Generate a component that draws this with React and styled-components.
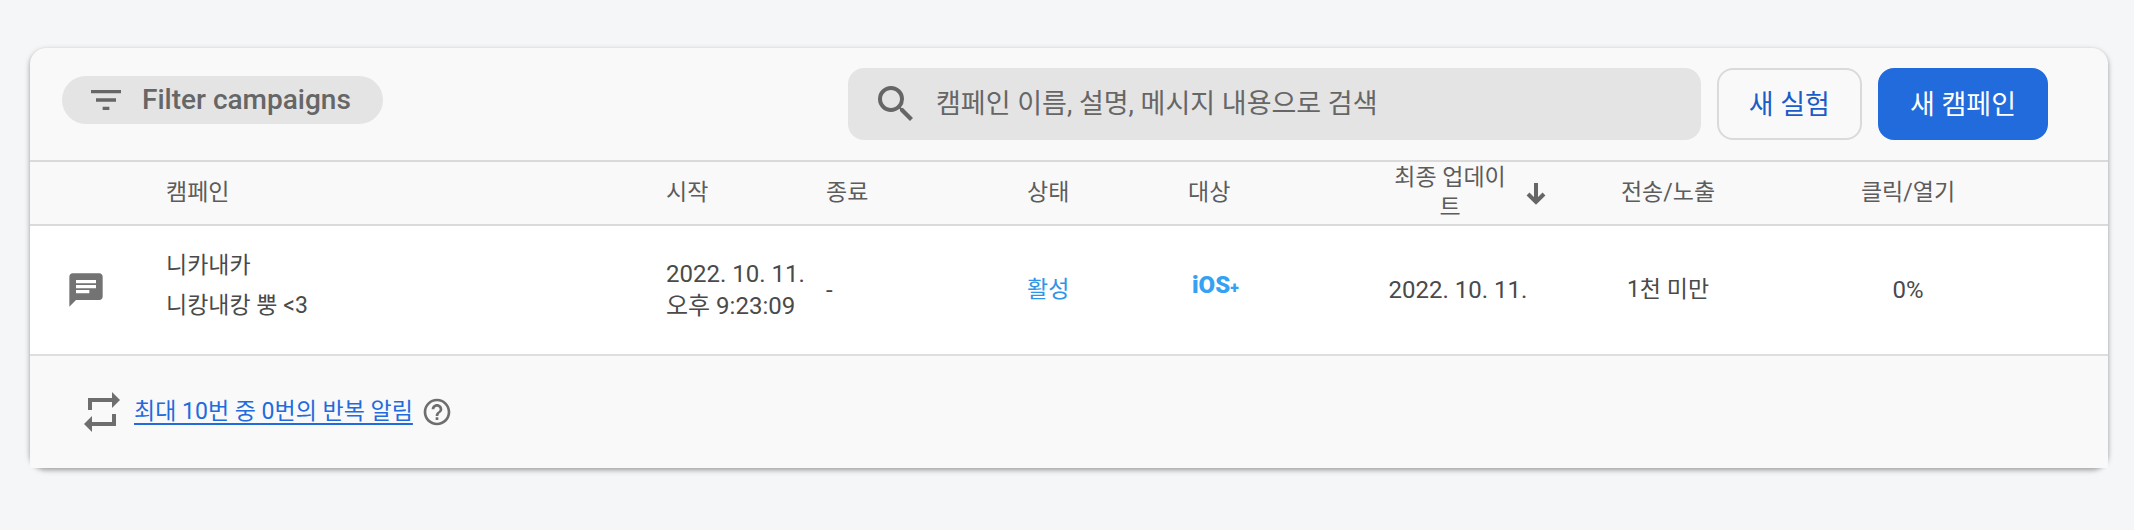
import React from 'react';
import styled, { createGlobalStyle } from 'styled-components';
import { MdFilterList, MdSearch, MdChat, MdHelpOutline } from 'react-icons/md';

const GlobalStyle = createGlobalStyle`
  body {
    margin: 0;
    background-color: #f4f6f8;
    font-family: Roboto, 'Noto Sans CJK KR', sans-serif;
  }
  * {
    box-sizing: border-box;
  }
  button, input {
    font-family: inherit;
  }
`;

const Page = styled.main`
  padding: 48px 26px 62px 30px;
`;

const Card = styled.section`
  border-radius: 16px;
  background-color: #f9f9f9;
  box-shadow: 0 2px 4px rgba(0, 0, 0, 0.2), 0 2px 6px rgba(0, 0, 0, 0.2);
`;

const Toolbar = styled.div`
  display: flex;
  justify-content: space-between;
  align-items: flex-start;
  gap: 16px;
  padding: 20px 60px 20px 32px;
`;

const FilterChip = styled.button`
  display: flex;
  align-items: center;
  gap: 16px;
  height: 48px;
  margin-top: 8px;
  padding: 0 32px 0 24px;
  border: 0;
  border-radius: 24px;
  background-color: #e4e4e4;
  color: #666;
  font-size: 28px;
  font-weight: 500;
  line-height: 32px;
  white-space: nowrap;
`;

const Actions = styled.div`
  display: flex;
  flex: 0 1 1200px;
  gap: 16px;
`;

const SearchBox = styled.label`
  display: flex;
  flex: 1;
  align-items: center;
  gap: 16px;
  height: 72px;
  padding: 0 24px;
  border-radius: 16px;
  background-color: #e4e4e4;
  color: #666;
  input {
    flex: 1;
    min-width: 0;
    padding: 0;
    border: 0;
    outline: 0;
    background: transparent;
    color: #666;
    font-size: 27px;
    line-height: 40px;
  }
  input::placeholder {
    color: #666;
    opacity: 1;
  }
`;

const Button = styled.button`
  height: 72px;
  padding: 0 30px 4px;
  border: 2px solid ${({ $primary }) => ($primary ? '#216bdd' : '#dadada')};
  border-radius: 16px;
  background-color: ${({ $primary }) => ($primary ? '#216bdd' : 'transparent')};
  color: ${({ $primary }) => ($primary ? '#fff' : '#1a5cc8')};
  font-size: 27px;
  font-weight: 400;
  white-space: nowrap;
`;

const Table = styled.table`
  width: 100%;
  table-layout: fixed;
  border-collapse: separate;
  border-spacing: 0;
`;

const HeadCell = styled.th`
  width: ${({ width }) => width || 'auto'};
  height: 66px;
  padding: 0;
  border-top: 2px solid #dadada;
  border-bottom: 2px solid #dadada;
  color: #5c5c5c;
  font-size: 23px;
  font-weight: 400;
  line-height: 30px;
  text-align: ${({ align }) => align || 'left'};
`;

const SortButton = styled.button`
  display: flex;
  align-items: center;
  justify-content: center;
  gap: 16px;
  width: 100%;
  padding: 0 0 0 20px;
  border: 0;
  background: transparent;
  color: inherit;
  font-size: inherit;
  line-height: inherit;
  span {
    width: 120px;
  }
`;

const Cell = styled.td`
  height: 130px;
  padding: 0;
  border-bottom: 2px solid #dedede;
  background-color: #fff;
  color: #4a4a4a;
  font-size: ${({ size }) => size || '23px'};
  line-height: 32px;
  text-align: ${({ align }) => align || 'left'};
`;

const TypeIcon = styled(MdChat)`
  display: block;
  margin-left: 36px;
  color: #737373;
`;

const Name = styled.div`
  line-height: 40px;
  padding-bottom: ${({ $last }) => ($last ? '8px' : '0')};
`;

const Status = styled.span`
  color: #2e95e6;
`;

const Platform = styled.span`
  display: block;
  padding: 0 0 8px 4px;
  color: #36a0f2;
  font-size: 24px;
  font-weight: 900;
  small {
    font-size: 16px;
  }
`;

const Footer = styled.footer`
  display: flex;
  align-items: center;
  height: 112px;
  padding: 0 54px;
  background-color: #f9f9f9;
  color: #6e6e6e;
`;

const FooterLink = styled.a`
  margin: 0 8px 0 14px;
  color: #216bdd;
  font-size: 23px;
  line-height: 32px;
  text-underline-offset: 4px;
  text-decoration-thickness: 2px;
`;

const RepeatIcon = () => (
  <svg width="36" height="40" viewBox="0 0 36 40" fill="currentColor" aria-hidden="true">
    <path d="M4 6H28V0L36 8L28 16V10H8V18H4Z" />
    <path d="M32 34H8V40L0 32L8 24V30H28V22H32Z" />
  </svg>
);

const SortArrow = () => (
  <svg width="20" height="28" viewBox="0 0 20 28" fill="none" stroke="#666" strokeWidth="4" aria-hidden="true">
    <path d="M10 4V23M2 15L10 23L18 15" />
  </svg>
);

const campaigns = [
  {
    name: '니카내카',
    message: '니캉내캉 뿡 <3',
    startDate: '2022. 10. 11.',
    startTime: '오후 9:23:09',
    end: '-',
    status: '활성',
    platform: 'iOS',
    updated: '2022. 10. 11.',
    sent: '1천 미만',
    clicked: '0%',
  },
];

export default function App() {
  return (
    <Page>
      <GlobalStyle />
      <Card>
        <Toolbar>
          <FilterChip type="button">
            <MdFilterList size={40} />
            Filter campaigns
          </FilterChip>
          <Actions>
            <SearchBox>
              <MdSearch size={48} />
              <input
                type="search"
                aria-label="캠페인 검색"
                placeholder="캠페인 이름, 설명, 메시지 내용으로 검색"
              />
            </SearchBox>
            <Button type="button">새 실험</Button>
            <Button type="button" $primary>
              새 캠페인
            </Button>
          </Actions>
        </Toolbar>
        <Table>
          <thead>
            <tr>
              <HeadCell width="136px" />
              <HeadCell>캠페인</HeadCell>
              <HeadCell width="160px">시작</HeadCell>
              <HeadCell width="201px">종료</HeadCell>
              <HeadCell width="161px">상태</HeadCell>
              <HeadCell width="160px">대상</HeadCell>
              <HeadCell width="220px" align="center">
                <SortButton type="button">
                  <span>최종 업데이트</span>
                  <SortArrow />
                </SortButton>
              </HeadCell>
              <HeadCell width="200px" align="center">
                전송/노출
              </HeadCell>
              <HeadCell width="280px" align="center">
                클릭/열기
              </HeadCell>
              <HeadCell width="60px" />
            </tr>
          </thead>
          <tbody>
            {campaigns.map(campaign => (
              <tr key={campaign.name}>
                <Cell>
                  <TypeIcon size={40} />
                </Cell>
                <Cell>
                  <Name>{campaign.name}</Name>
                  <Name $last>{campaign.message}</Name>
                </Cell>
                <Cell size="24px">
                  {campaign.startDate}
                  <br />
                  {campaign.startTime}
                </Cell>
                <Cell size="24px">{campaign.end}</Cell>
                <Cell>
                  <Status>{campaign.status}</Status>
                </Cell>
                <Cell>
                  <Platform>
                    {campaign.platform}
                    <small>+</small>
                  </Platform>
                </Cell>
                <Cell size="24px" align="center">
                  {campaign.updated}
                </Cell>
                <Cell align="center">{campaign.sent}</Cell>
                <Cell size="24px" align="center">
                  {campaign.clicked}
                </Cell>
                <Cell />
              </tr>
            ))}
          </tbody>
        </Table>
        <Footer>
          <RepeatIcon />
          <FooterLink href="#recurring">최대 10번 중 0번의 반복 알림</FooterLink>
          <MdHelpOutline size={32} />
        </Footer>
      </Card>
    </Page>
  );
}
